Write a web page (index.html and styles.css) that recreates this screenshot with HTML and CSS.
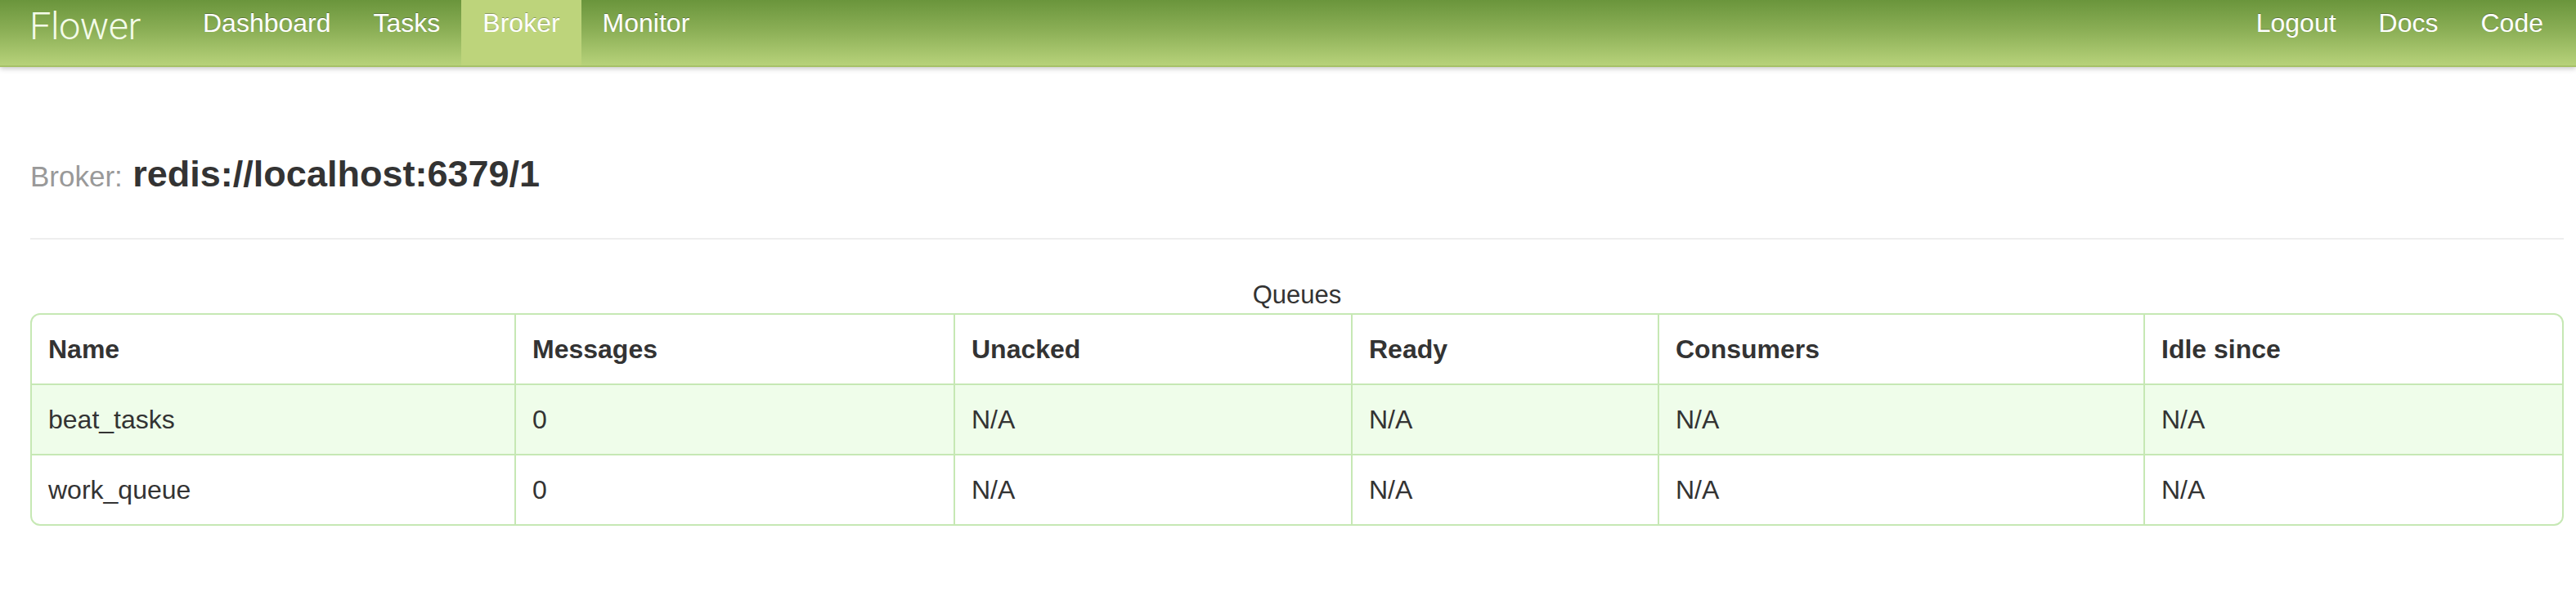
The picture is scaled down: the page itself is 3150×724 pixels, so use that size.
FILE: index.html
```html
<!DOCTYPE html>
<html lang="en">
<head>
<meta charset="utf-8">
<title>Flower - Broker</title>
<link rel="stylesheet" href="styles.css">
</head>
<body>
<header class="navbar">
  <a class="brand" href="#">Flower</a>
  <ul class="nav">
    <li><a href="#">Dashboard</a></li>
    <li><a href="#">Tasks</a></li>
    <li class="active"><a href="#">Broker</a></li>
    <li><a href="#">Monitor</a></li>
  </ul>
  <ul class="nav nav-right">
    <li><a href="#">Logout</a></li>
    <li><a href="#">Docs</a></li>
    <li><a href="#">Code</a></li>
  </ul>
</header>
<main class="container">
  <h2 class="page-title"><small>Broker:</small> redis://localhost:6379/1</h2>
  <hr class="divider">
  <table class="queues">
    <caption>Queues</caption>
    <thead>
      <tr>
        <th class="c1">Name</th>
        <th class="c2">Messages</th>
        <th class="c3">Unacked</th>
        <th class="c4">Ready</th>
        <th class="c5">Consumers</th>
        <th class="c6">Idle since</th>
      </tr>
    </thead>
    <tbody>
      <tr class="highlight">
        <td>beat_tasks</td>
        <td>0</td>
        <td>N/A</td>
        <td>N/A</td>
        <td>N/A</td>
        <td>N/A</td>
      </tr>
      <tr>
        <td>work_queue</td>
        <td>0</td>
        <td>N/A</td>
        <td>N/A</td>
        <td>N/A</td>
        <td>N/A</td>
      </tr>
    </tbody>
  </table>
</main>
</body>
</html>
```

FILE: styles.css
```css
* { box-sizing: border-box; }

html, body {
  margin: 0;
  padding: 0;
  background: #fff;
  font-family: "Liberation Sans", Arial, sans-serif;
  color: #333;
}

.navbar {
  display: flex;
  align-items: stretch;
  height: 82px;
  padding: 0 14px 0 36px;
  background: linear-gradient(to bottom, #6a953c 0%, #8aae55 45%, #b7d27a 100%);
  border-bottom: 2px solid #a6c168;
  box-shadow: 0 2px 6px rgba(0, 0, 0, 0.22);
  position: relative;
}

.brand {
  width: 186px;
  padding-top: 8px;
  font-family: Roboto, "Liberation Sans", sans-serif;
  font-weight: 300;
  font-size: 47px;
  line-height: 1;
  color: #f4fbe9;
  text-decoration: none;
  letter-spacing: -0.5px;
}

.nav {
  display: flex;
  margin: 0;
  padding: 0;
  list-style: none;
}

.nav-right {
  margin-left: auto;
}

.nav li a {
  display: block;
  height: 80px;
  padding: 12px 26px 0;
  font-size: 32px;
  line-height: 1;
  color: #fff;
  text-decoration: none;
  text-shadow: 0 -1px 0 rgba(0, 0, 0, 0.28);
}

.nav li.active a {
  background: #bdd47b;
}

.container {
  padding: 101px 15px 40px 37px;
}

.page-title {
  margin: 0;
  font-size: 45px;
  line-height: 60px;
  font-weight: bold;
  color: #333;
}

.page-title small {
  font-size: 35px;
  font-weight: normal;
  color: #999;
}

.divider {
  margin: 45px 0 0;
  border: 0;
  border-top: 2px solid #eee;
  height: 0;
}

.queues {
  width: 100%;
  margin-top: 48px;
  table-layout: fixed;
  border-collapse: separate;
  border-spacing: 0;
  border: 2px solid #c6e8b4;
  border-radius: 12px;
  font-size: 32px;
}

.queues caption {
  font-size: 31px;
  line-height: 40px;
  padding-bottom: 2px;
  color: #333;
}

.queues th,
.queues td {
  height: 84px;
  padding: 0 18px 0 20px;
  text-align: left;
  vertical-align: middle;
  line-height: 36px;
  border-left: 2px solid #c6e8b4;
  border-top: 2px solid #c6e8b4;
  white-space: nowrap;
}

.queues th:first-child,
.queues td:first-child {
  border-left: 0;
}

.queues thead th {
  border-top: 0;
  font-weight: bold;
  height: 84px;
}

.queues tbody td {
  height: 86px;
}

.queues .c1 { width: 590px; }
.queues .c2 { width: 537px; }
.queues .c3 { width: 486px; }
.queues .c4 { width: 375px; }
.queues .c5 { width: 594px; }
.queues .c6 { width: 512px; }

.queues tr.highlight td {
  background: #effdea;
}
```
